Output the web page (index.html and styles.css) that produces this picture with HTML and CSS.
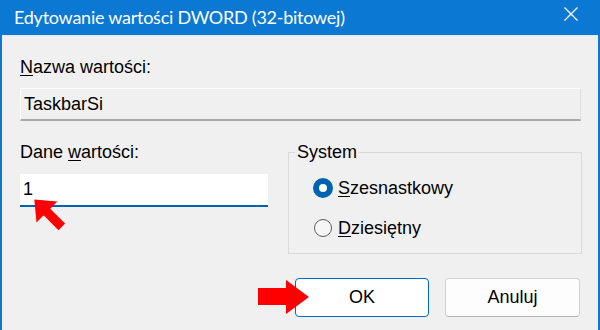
FILE: index.html
```html
<!DOCTYPE html>
<html lang="pl">
<head>
<meta charset="utf-8">
<title>Edytowanie wartości DWORD</title>
<link rel="stylesheet" href="styles.css">
</head>
<body>
<div class="window">
  <div class="titlebar">
    <span class="title">Edytowanie wartości DWORD (32-bitowej)</span>
    <svg class="close" width="16" height="16" viewBox="0 0 16 16"><path d="M1.5 1.5 L14.5 14.5 M14.5 1.5 L1.5 14.5" stroke="#fff" stroke-width="1.3" fill="none"/></svg>
  </div>
  <div class="content">
    <div class="label"><u>N</u>azwa wartości:</div>
    <div class="namefield">TaskbarSi</div>
    <div class="middle">
      <div class="leftcol">
        <div class="label">Dane <u>w</u>artości:</div>
        <div class="valuefield">1</div>
      </div>
      <fieldset class="group">
        <legend>System</legend>
        <div class="radio-row"><span class="radio checked"></span><span><u>S</u>zesnastkowy</span></div>
        <div class="radio-row"><span class="radio"></span><span><u>D</u>ziesiętny</span></div>
      </fieldset>
    </div>
    <div class="buttons">
      <div class="btn primary">OK</div>
      <div class="btn">Anuluj</div>
    </div>
  </div>
  <svg class="arrow arrow-up" width="44" height="44" viewBox="0 0 40 40">
    <polygon fill="#f00" points="3,4 24,6 17.5,12.5 31,26 25,32 11.5,18.5 5,25"/>
  </svg>
  <svg class="arrow arrow-right" width="52" height="36" viewBox="0 0 52 36">
    <polygon fill="#f00" points="0,9 28,9 28,1 51,18 28,35 28,26 0,26"/>
  </svg>
</div>
</body>
</html>
```
FILE: styles.css
```css
html, body {
  margin: 0;
  padding: 0;
}
body {
  width: 600px;
  height: 330px;
  overflow: hidden;
  font-family: "Liberation Sans", Arial, sans-serif;
  color: #000;
}
.window {
  position: relative;
  width: 596px;
  height: 330px;
  background: #f0f0f0;
  border-left: 2px solid #0b78d3;
  border-right: 2px solid #0b78d3;
}
.titlebar {
  height: 35px;
  background: #0b78d3;
  color: #fff;
  display: flex;
  align-items: center;
  justify-content: space-between;
  padding: 0 19px 0 12px;
  border-bottom: 1px solid #e6e9ec;
}
.title {
  font-family: Lato, "Liberation Sans", sans-serif;
  font-size: 18px;
  letter-spacing: -0.25px;
  margin-top: -2px;
}
.close {
  margin-top: -7px;
}
.content {
  padding: 21px 17px 0 18px;
}
.label {
  font-size: 18px;
  line-height: 20px;
}
u {
  text-decoration-thickness: 1px;
  text-underline-offset: 2px;
}
.namefield {
  margin-top: 11px;
  height: 30px;
  box-sizing: content-box;
  border-top: 1px solid #fff;
  border-left: 1px solid #fff;
  border-right: 1px solid #dedede;
  border-bottom: 2px solid #a9a9a9;
  background: #f0f0f0;
  font-size: 18px;
  line-height: 30px;
  padding-left: 3px;
}
.middle {
  margin-top: 21px;
  display: grid;
  grid-template-columns: 248px 294px;
  column-gap: 20px;
}
.valuefield {
  margin-top: 12px;
  height: 31px;
  background: #fff;
  border-bottom: 2px solid #0063b1;
  font-size: 18px;
  line-height: 31px;
  padding-left: 3px;
}
.group {
  margin: 0;
  padding: 6px 0 5px 25px;
  border: 1px solid #d9d9d9;
  min-width: 0;
}
.group legend {
  font-size: 18px;
  line-height: 20px;
  padding: 0 2px;
  margin-left: -19px;
}
.radio-row {
  height: 40px;
  display: flex;
  align-items: center;
  gap: 6px;
  font-size: 18px;
}
.radio {
  width: 18px;
  height: 18px;
  border-radius: 50%;
  border: 1px solid #5d5d5d;
  background: #f6f6f6;
  box-sizing: border-box;
}
.radio.checked {
  width: 20px;
  height: 20px;
  border: 6px solid #0063b1;
  background: #fff;
  margin-left: -1px;
  margin-right: -1px;
}
.buttons {
  margin-top: 24px;
  display: flex;
  justify-content: flex-end;
  gap: 16px;
  padding-right: 1px;
}
.btn {
  width: 133px;
  height: 37px;
  box-sizing: content-box;
  background: #fdfdfd;
  border: 1px solid #d2d2d2;
  border-bottom-color: #b6b6b6;
  border-radius: 4px;
  font-size: 18px;
  display: flex;
  align-items: center;
  justify-content: center;
}
.btn.primary {
  width: 132px;
  border-color: #0067c0;
  background: #fff;
}
.arrow {
  position: absolute;
}
.arrow-up {
  left: 29px;
  top: 195px;
}
.arrow-right {
  left: 256px;
  top: 279px;
}
```
